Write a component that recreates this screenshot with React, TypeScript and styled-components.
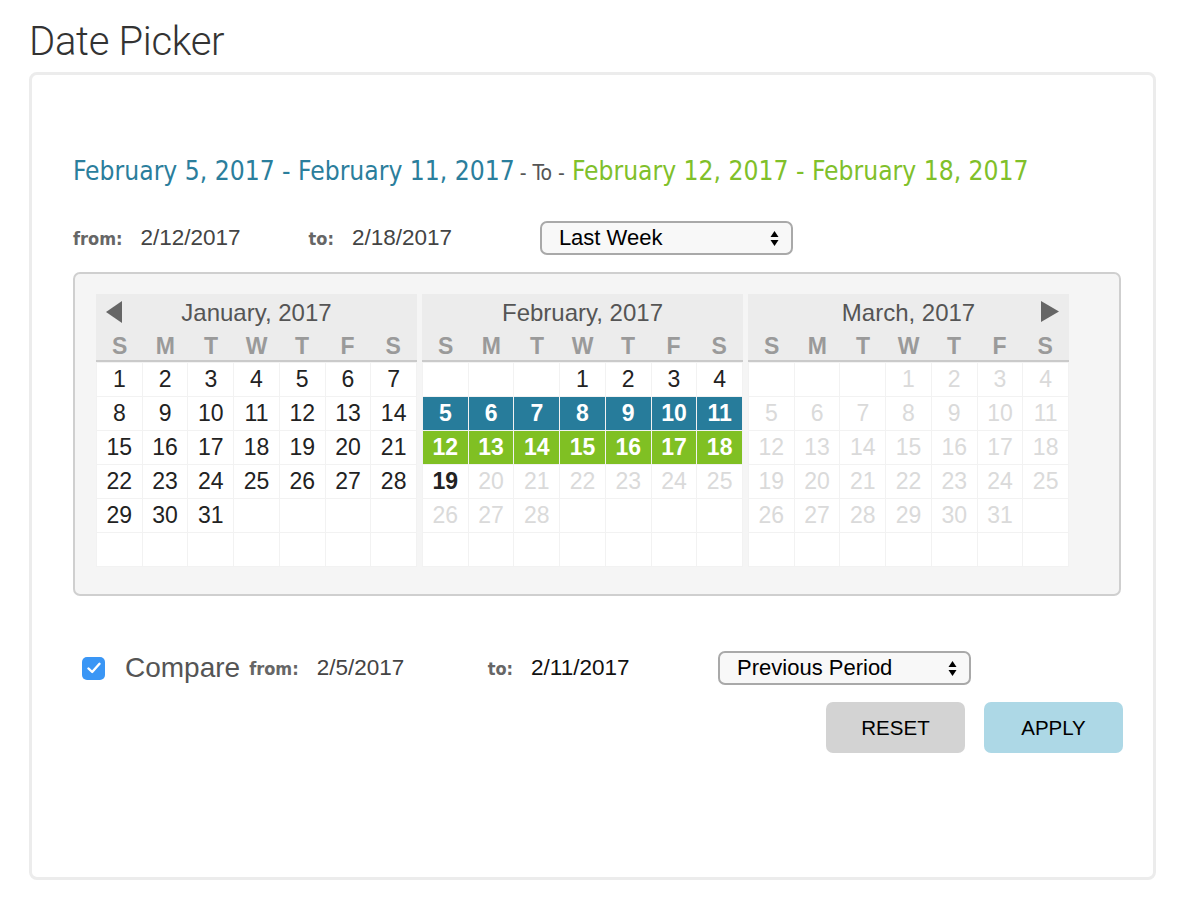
import React from "react";
import styled, { createGlobalStyle } from "styled-components";

const GlobalStyle = createGlobalStyle`
  html, body { margin: 0; padding: 0; background: #fff; }
  body { font-family: "Liberation Sans", Arial, sans-serif; color: #222; }
  * { box-sizing: border-box; }
`;

const Page = styled.div`
  width: 1196px;
  height: 920px;
  padding: 20px 0 0 29px;
`;

const Title = styled.h1`
  margin: 0 0 8px 0;
  font-family: "Roboto", "Liberation Sans", sans-serif;
  font-weight: 300;
  font-size: 40px;
  line-height: 44px;
  color: #333;
  letter-spacing: -0.3px;
`;

const Card = styled.div`
  width: 1127px;
  height: 808px;
  border: 3px solid #ececec;
  border-radius: 8px;
  padding: 80px 33px 0 41px;
  display: flex;
  flex-direction: column;
`;

const RangeHeader = styled.div`
  font-family: "Liberation Sans Narrow", "DejaVu Sans Condensed", "Roboto", sans-serif;
  font-size: 26.2px;
  line-height: 32px;
  height: 32px;
  white-space: nowrap;
`;

const RangeText = styled.span<{ $tone: "blue" | "green" }>`
  color: ${(p) => (p.$tone === "blue" ? "#2b7e9c" : "#80c02a")};
`;

const Joiner = styled.span`
  color: #555;
  font-size: 21px;
  padding: 0 7px 0 5px;
`;

const FieldRow = styled.div`
  display: flex;
  align-items: center;
  height: 34px;
  margin-top: 34px;
`;

const FieldLabel = styled.span`
  font-family: "Liberation Sans Narrow", "DejaVu Sans Condensed", "Roboto", sans-serif;
  font-weight: 700;
  font-size: 18px;
  color: #666;
  margin-right: 18px;
`;

const DateValue = styled.span<{ $w: number; $dark?: boolean }>`
  display: inline-block;
  width: ${(p) => p.$w}px;
  font-size: 22.5px;
  color: ${(p) => (p.$dark ? "#111" : "#444")};
`;

const SelectBox = styled.div`
  width: 253px;
  height: 34px;
  border: 2px solid #a9a9a9;
  border-radius: 7px;
  background: #f8f8f8;
  display: flex;
  align-items: center;
  justify-content: space-between;
  padding: 0 12px 0 17px;
  font-size: 22px;
  color: #000;
`;

const Arrows = () => (
  <svg width="9" height="17" viewBox="0 0 9 17">
    <path d="M4.5 1 L8.5 7 L0.5 7 Z" fill="#000" />
    <path d="M0.5 10 L8.5 10 L4.5 16 Z" fill="#000" />
  </svg>
);

const CalendarBox = styled.div`
  margin-top: 17px;
  width: 1048px;
  height: 324px;
  border: 2px solid #cfcfcf;
  border-radius: 7px;
  background: #f5f5f5;
  padding: 20px 0 0 21px;
  display: flex;
  gap: 5px;
  align-items: flex-start;
`;

const Month = styled.div`
  width: 321px;
  display: flex;
  flex-direction: column;
`;

const MonthHead = styled.div`
  background: #ececec;
  border-bottom: 2px solid #cacaca;
  height: 68px;
  display: flex;
  flex-direction: column;
`;

const MonthTitleRow = styled.div`
  position: relative;
  height: 38px;
  display: flex;
  align-items: center;
  justify-content: center;
  font-size: 24px;
  color: #555;
`;

const NavArrow = styled.span<{ $side: "left" | "right" }>`
  position: absolute;
  top: 7px;
  ${(p) => (p.$side === "left" ? "left: 10px;" : "right: 10px;")}
  display: flex;
`;

const WeekRow = styled.div`
  display: grid;
  grid-template-columns: repeat(7, 1fr);
  padding: 0 1px;
  height: 28px;
  align-items: center;
`;

const WeekDay = styled.span`
  text-align: center;
  font-weight: 700;
  font-size: 23px;
  color: #9a9a9a;
`;

const DayGrid = styled.div`
  display: grid;
  grid-template-columns: repeat(7, 1fr);
  grid-auto-rows: 33px;
  gap: 1px;
  padding: 1px;
  background: #f2f2f2;
`;

type Tone = "normal" | "muted" | "blue" | "green" | "today" | "empty";

const Day = styled.div<{ $tone: Tone }>`
  display: flex;
  align-items: center;
  justify-content: center;
  font-size: 23px;
  background: ${(p) =>
    p.$tone === "blue" ? "#277c9b" : p.$tone === "green" ? "#80c023" : "#fff"};
  color: ${(p) =>
    p.$tone === "blue" || p.$tone === "green"
      ? "#fff"
      : p.$tone === "muted"
      ? "#dadada"
      : "#222"};
  font-weight: ${(p) =>
    p.$tone === "blue" || p.$tone === "green" || p.$tone === "today" ? 700 : 400};
`;

const CompareRow = styled.div`
  margin-top: 55px;
  display: flex;
  align-items: center;
  height: 34px;
  padding-left: 9px;
`;

const CheckBox = styled.span`
  width: 23px;
  height: 23px;
  border-radius: 5px;
  background: #3a96f5;
  display: flex;
  align-items: center;
  justify-content: center;
  margin-right: 20px;
`;

const CompareLabel = styled.span`
  font-size: 28px;
  color: #555;
  margin-right: 9px;
`;

const ButtonRow = styled.div`
  margin-top: 17px;
  width: 1050px;
  display: flex;
  justify-content: flex-end;
  gap: 19px;
`;

const ActionButton = styled.button<{ $primary?: boolean }>`
  width: 139px;
  height: 51px;
  border: none;
  border-radius: 7px;
  background: ${(p) => (p.$primary ? "#add8e6" : "#d3d3d3")};
  font-family: "Liberation Sans", Arial, sans-serif;
  font-size: 20.5px;
  color: #000;
  cursor: pointer;
`;

const WEEK = ["S", "M", "T", "W", "T", "F", "S"];

type Cell = { label: string; tone: Tone };

function buildMonth(offset: number, days: number, toneFor: (d: number) => Tone): Cell[] {
  const cells: Cell[] = [];
  for (let i = 0; i < offset; i++) cells.push({ label: "", tone: "empty" });
  for (let d = 1; d <= days; d++) cells.push({ label: String(d), tone: toneFor(d) });
  while (cells.length < 42) cells.push({ label: "", tone: "empty" });
  return cells;
}

const months = [
  { title: "January, 2017", nav: "left" as const, cells: buildMonth(0, 31, () => "normal") },
  {
    title: "February, 2017",
    nav: undefined,
    cells: buildMonth(3, 28, (d) =>
      d <= 4 ? "normal" : d <= 11 ? "blue" : d <= 18 ? "green" : d === 19 ? "today" : "muted"
    ),
  },
  { title: "March, 2017", nav: "right" as const, cells: buildMonth(3, 31, () => "muted") },
];

const LeftTri = () => (
  <svg width="17" height="22" viewBox="0 0 17 22">
    <path d="M16 0 L16 22 L0 11 Z" fill="#666" />
  </svg>
);
const RightTri = () => (
  <svg width="18" height="21" viewBox="0 0 18 21">
    <path d="M0 0 L18 10.5 L0 21 Z" fill="#666" />
  </svg>
);

export default function App() {
  return (
    <Page>
      <GlobalStyle />
      <Title>Date Picker</Title>
      <Card>
        <RangeHeader>
          <RangeText $tone="blue">February 5, 2017 - February 11, 2017</RangeText>
          <Joiner>- To -</Joiner>
          <RangeText $tone="green">February 12, 2017 - February 18, 2017</RangeText>
        </RangeHeader>

        <FieldRow>
          <FieldLabel>from:</FieldLabel>
          <DateValue $w={168}>2/12/2017</DateValue>
          <FieldLabel>to:</FieldLabel>
          <DateValue $w={188}>2/18/2017</DateValue>
          <SelectBox>
            <span>Last Week</span>
            <Arrows />
          </SelectBox>
        </FieldRow>

        <CalendarBox>
          {months.map((m) => (
            <Month key={m.title}>
              <MonthHead>
                <MonthTitleRow>
                  {m.nav === "left" && (
                    <NavArrow $side="left">
                      <LeftTri />
                    </NavArrow>
                  )}
                  {m.title}
                  {m.nav === "right" && (
                    <NavArrow $side="right">
                      <RightTri />
                    </NavArrow>
                  )}
                </MonthTitleRow>
                <WeekRow>
                  {WEEK.map((w, i) => (
                    <WeekDay key={i}>{w}</WeekDay>
                  ))}
                </WeekRow>
              </MonthHead>
              <DayGrid>
                {m.cells.map((c, i) => (
                  <Day key={i} $tone={c.tone}>
                    {c.label}
                  </Day>
                ))}
              </DayGrid>
            </Month>
          ))}
        </CalendarBox>

        <CompareRow>
          <CheckBox>
            <svg width="14" height="12" viewBox="0 0 14 12">
              <path d="M1.5 6.5 L5.2 10 L12.5 1.8" stroke="#fff" strokeWidth="2.4" fill="none" strokeLinecap="round" strokeLinejoin="round" />
            </svg>
          </CheckBox>
          <CompareLabel>Compare</CompareLabel>
          <FieldLabel>from:</FieldLabel>
          <DateValue $w={171}>2/5/2017</DateValue>
          <FieldLabel>to:</FieldLabel>
          <DateValue $w={187} $dark>2/11/2017</DateValue>
          <SelectBox>
            <span>Previous Period</span>
            <Arrows />
          </SelectBox>
        </CompareRow>

        <ButtonRow>
          <ActionButton>RESET</ActionButton>
          <ActionButton $primary>APPLY</ActionButton>
        </ButtonRow>
      </Card>
    </Page>
  );
}
